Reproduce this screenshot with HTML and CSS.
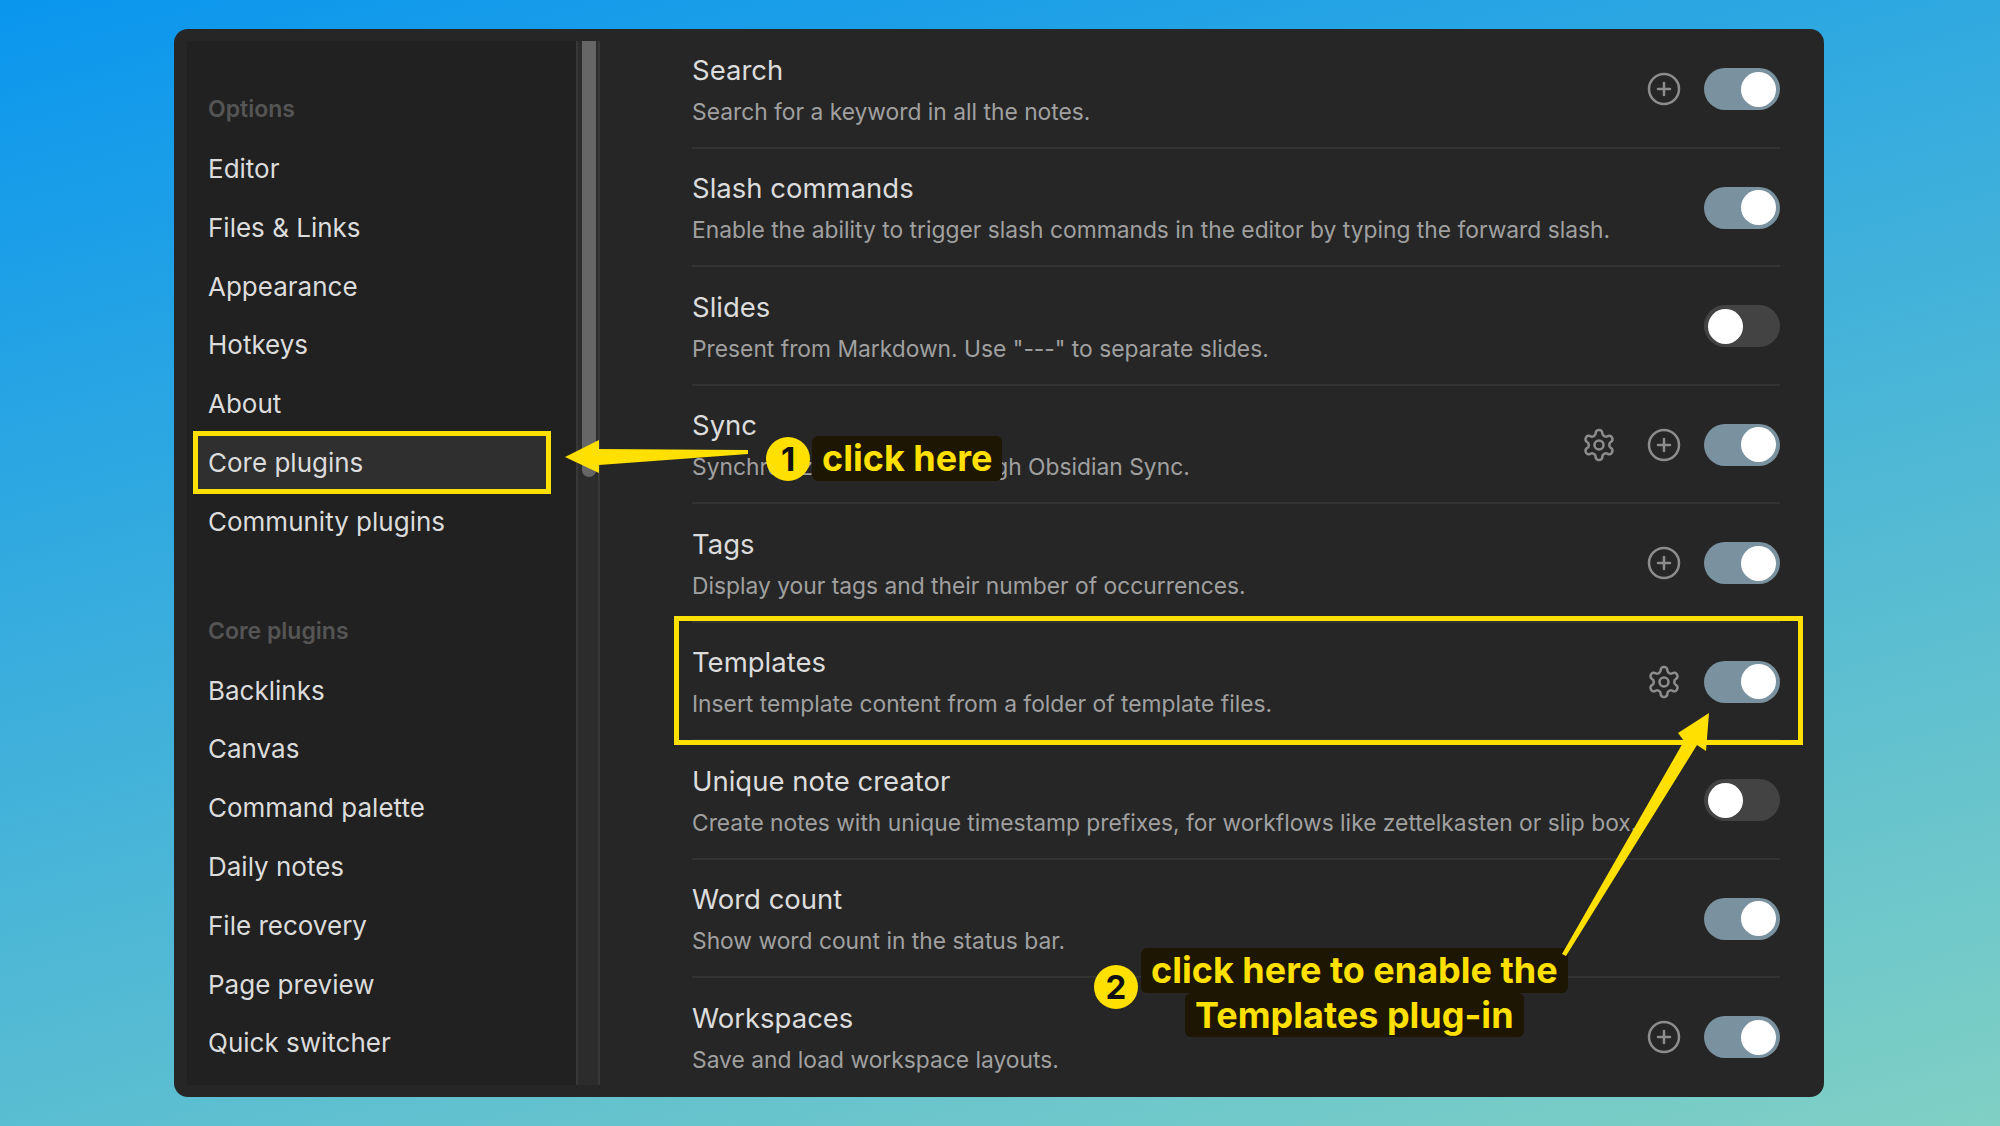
FILE: index.html
```html
<!DOCTYPE html>
<html lang="en">
<head>
  <meta charset="UTF-8">
  <title>Core plugins</title>
  <link rel="stylesheet" href="styles.css">
</head>
<body>
  <div class="window">
    <nav class="sidebar">
      <div class="nav-heading first">Options</div>
      <div class="nav-item">Editor</div>
      <div class="nav-item">Files &amp; Links</div>
      <div class="nav-item">Appearance</div>
      <div class="nav-item">Hotkeys</div>
      <div class="nav-item">About</div>
      <div class="nav-item active">Core plugins</div>
      <div class="nav-item">Community plugins</div>
      <div class="nav-heading">Core plugins</div>
      <div class="nav-item">Backlinks</div>
      <div class="nav-item">Canvas</div>
      <div class="nav-item">Command palette</div>
      <div class="nav-item">Daily notes</div>
      <div class="nav-item">File recovery</div>
      <div class="nav-item">Page preview</div>
      <div class="nav-item">Quick switcher</div>
    </nav>

    <div class="scroll-track"><div class="scroll-thumb"></div></div>

    <main class="content">
      <div class="row">
        <div class="row-info">
          <div class="row-title">Search</div>
          <div class="row-desc">Search for a keyword in all the notes.</div>
        </div>
        <svg class="icon" viewBox="0 0 24 24"><use href="#plus-circle"/></svg>
        <div class="toggle on"></div>
      </div>
      <div class="row">
        <div class="row-info">
          <div class="row-title">Slash commands</div>
          <div class="row-desc">Enable the ability to trigger slash commands in the editor by typing the forward slash.</div>
        </div>
        <div class="toggle on"></div>
      </div>
      <div class="row">
        <div class="row-info">
          <div class="row-title">Slides</div>
          <div class="row-desc">Present from Markdown. Use "---" to separate slides.</div>
        </div>
        <div class="toggle"></div>
      </div>
      <div class="row">
        <div class="row-info">
          <div class="row-title">Sync</div>
          <div class="row-desc">Synchronize your files through Obsidian Sync.</div>
        </div>
        <svg class="icon" viewBox="0 0 24 24"><use href="#gear"/></svg>
        <svg class="icon" viewBox="0 0 24 24"><use href="#plus-circle"/></svg>
        <div class="toggle on"></div>
      </div>
      <div class="row">
        <div class="row-info">
          <div class="row-title">Tags</div>
          <div class="row-desc">Display your tags and their number of occurrences.</div>
        </div>
        <svg class="icon" viewBox="0 0 24 24"><use href="#plus-circle"/></svg>
        <div class="toggle on"></div>
      </div>
      <div class="row">
        <div class="row-info">
          <div class="row-title">Templates</div>
          <div class="row-desc">Insert template content from a folder of template files.</div>
        </div>
        <svg class="icon" viewBox="0 0 24 24"><use href="#gear"/></svg>
        <div class="toggle on"></div>
      </div>
      <div class="row">
        <div class="row-info">
          <div class="row-title">Unique note creator</div>
          <div class="row-desc">Create notes with unique timestamp prefixes, for workflows like zettelkasten or slip box.</div>
        </div>
        <div class="toggle"></div>
      </div>
      <div class="row">
        <div class="row-info">
          <div class="row-title">Word count</div>
          <div class="row-desc">Show word count in the status bar.</div>
        </div>
        <div class="toggle on"></div>
      </div>
      <div class="row">
        <div class="row-info">
          <div class="row-title">Workspaces</div>
          <div class="row-desc">Save and load workspace layouts.</div>
        </div>
        <svg class="icon" viewBox="0 0 24 24"><use href="#plus-circle"/></svg>
        <div class="toggle on"></div>
      </div>
    </main>
  </div>

  <!-- annotations drawn over the screenshot -->
  <div class="box box-nav"></div>
  <div class="box box-row"></div>

  <div class="badge badge-one">1</div>
  <div class="callout callout-one"><span>click here</span></div>
  <div class="badge badge-two">2</div>
  <div class="callout callout-two">
    <span>click here to enable the</span>
    <span>Templates plug-in</span>
  </div>

  <svg class="arrows" viewBox="0 0 2000 1126">
    <polygon points="565,457 599,440 599,449 748,450 748,454 599,465 599,473"/>
    <polygon points="1709,713 1706,751 1697,745 1566,956 1562,954 1684,741 1678,733"/>
  </svg>

  <svg class="defs" width="0" height="0">
    <symbol id="plus-circle" viewBox="0 0 24 24">
      <circle cx="12" cy="12" r="10"/>
      <path d="M8 12h8M12 8v8"/>
    </symbol>
    <symbol id="gear" viewBox="0 0 24 24">
      <path d="M12.22 2h-.44a2 2 0 0 0-2 2v.18a2 2 0 0 1-1 1.73l-.43.25a2 2 0 0 1-2 0l-.15-.08a2 2 0 0 0-2.73.73l-.22.38a2 2 0 0 0 .73 2.73l.15.1a2 2 0 0 1 1 1.72v.51a2 2 0 0 1-1 1.74l-.15.09a2 2 0 0 0-.73 2.73l.22.38a2 2 0 0 0 2.73.73l.15-.08a2 2 0 0 1 2 0l.43.25a2 2 0 0 1 1 1.73V20a2 2 0 0 0 2 2h.44a2 2 0 0 0 2-2v-.18a2 2 0 0 1 1-1.73l.43-.25a2 2 0 0 1 2 0l.15.08a2 2 0 0 0 2.73-.73l.22-.39a2 2 0 0 0-.73-2.73l-.15-.08a2 2 0 0 1-1-1.74v-.5a2 2 0 0 1 1-1.74l.15-.09a2 2 0 0 0 .73-2.73l-.22-.38a2 2 0 0 0-2.73-.73l-.15.08a2 2 0 0 1-2 0l-.43-.25a2 2 0 0 1-1-1.73V4a2 2 0 0 0-2-2z"/>
      <circle cx="12" cy="12" r="3"/>
    </symbol>
  </svg>
</body>
</html>
```

FILE: styles.css
```css
html, body {
  height: 100%;
}

body {
  margin: 0;
  padding: 29px 176px 29px 174px;
  box-sizing: border-box;
  background: linear-gradient(165deg, #0a96ee, #80d0c4);
  font-family: Inter, "Liberation Sans", sans-serif;
  overflow: hidden;
}

.window {
  display: flex;
  height: 1068px;
  padding: 12px 0 12px 13px;
  box-sizing: border-box;
  background: #262626;
  border-radius: 14px;
  overflow: hidden;
}

.sidebar {
  width: 389px;
  flex-shrink: 0;
  padding: 46px 0 0 21px;
  box-sizing: border-box;
  background: #212121;
}

.nav-heading {
  height: 45px;
  margin-top: 57px;
  margin-bottom: 8px;
  font-size: 23px;
  font-weight: 600;
  line-height: 45px;
  color: #555;
}

.nav-heading.first {
  margin-top: 0;
}

.nav-item {
  height: 58.8px;
  font-size: 26px;
  line-height: 58.8px;
  color: #dcdcdc;
}

.nav-item.active {
  margin-left: -15px;
  margin-right: 30px;
  padding-left: 15px;
  background: #2f2f2f;
}

.scroll-track {
  position: relative;
  width: 24px;
  flex-shrink: 0;
  background: #2c2c2c;
  border-left: 2px solid #383838;
  border-right: 2px solid #383838;
  box-sizing: border-box;
}

.scroll-thumb {
  width: 14px;
  height: 436px;
  margin-left: 4px;
  background: #666;
  border-radius: 0 0 7px 7px;
}

.content {
  flex: 1;
  margin: -11px 44px 0 92px;
  min-width: 0;
}

.row {
  display: flex;
  align-items: center;
  height: 118.5px;
  border-bottom: 2px solid #333;
  box-sizing: border-box;
}

.row:last-child {
  border-bottom-color: transparent;
}

.row-info {
  flex: 1;
  min-width: 0;
  padding-top: 3px;
}

.row-title {
  font-size: 27.5px;
  line-height: 40px;
  color: #dcdcdc;
}

.row-desc {
  margin-top: 4px;
  font-size: 22.8px;
  line-height: 36px;
  color: #a0a0a0;
  white-space: nowrap;
}

.icon {
  width: 36px;
  height: 36px;
  margin-top: 2px;
  margin-right: 22px;
  margin-left: 7px;
  fill: none;
  stroke: #8c8c8c;
  stroke-width: 1.7;
  stroke-linecap: round;
  stroke-linejoin: round;
}

.toggle {
  display: flex;
  align-items: center;
  justify-content: flex-start;
  width: 76px;
  height: 42px;
  margin-top: 2px;
  padding: 0 4px;
  box-sizing: border-box;
  background: #434343;
  border-radius: 21px;
}

.toggle::after {
  content: "";
  width: 35px;
  height: 35px;
  background: #fff;
  border-radius: 50%;
}

.toggle.on {
  justify-content: flex-end;
  background: #7a929f;
}

.box {
  position: absolute;
  border: 5px solid #ffe000;
  box-sizing: border-box;
}

.box-nav {
  left: 193px;
  top: 431px;
  width: 358px;
  height: 63px;
}

.box-row {
  left: 674px;
  top: 616px;
  width: 1129px;
  height: 129px;
}

.arrows {
  position: absolute;
  left: 0;
  top: 0;
  width: 2000px;
  height: 1126px;
  fill: #ffe000;
}

.badge {
  position: absolute;
  width: 44px;
  height: 44px;
  background: #ffe000;
  border-radius: 50%;
  font-size: 33px;
  font-weight: 700;
  line-height: 44px;
  text-align: center;
  color: #111;
}

.badge-one {
  left: 766px;
  top: 437px;
}

.badge-two {
  left: 1094px;
  top: 965px;
}

.callout {
  position: absolute;
  display: flex;
  flex-direction: column;
  align-items: center;
  font-size: 36px;
  font-weight: 700;
  line-height: 44.5px;
  color: #ffe000;
  white-space: nowrap;
}

.callout span {
  padding: 0 10px;
  background: #1c1603;
  border-radius: 6px;
}

.callout-one {
  left: 812px;
  top: 436px;
}

.callout-two {
  left: 1141px;
  top: 948px;
}

.defs {
  position: absolute;
}
```
